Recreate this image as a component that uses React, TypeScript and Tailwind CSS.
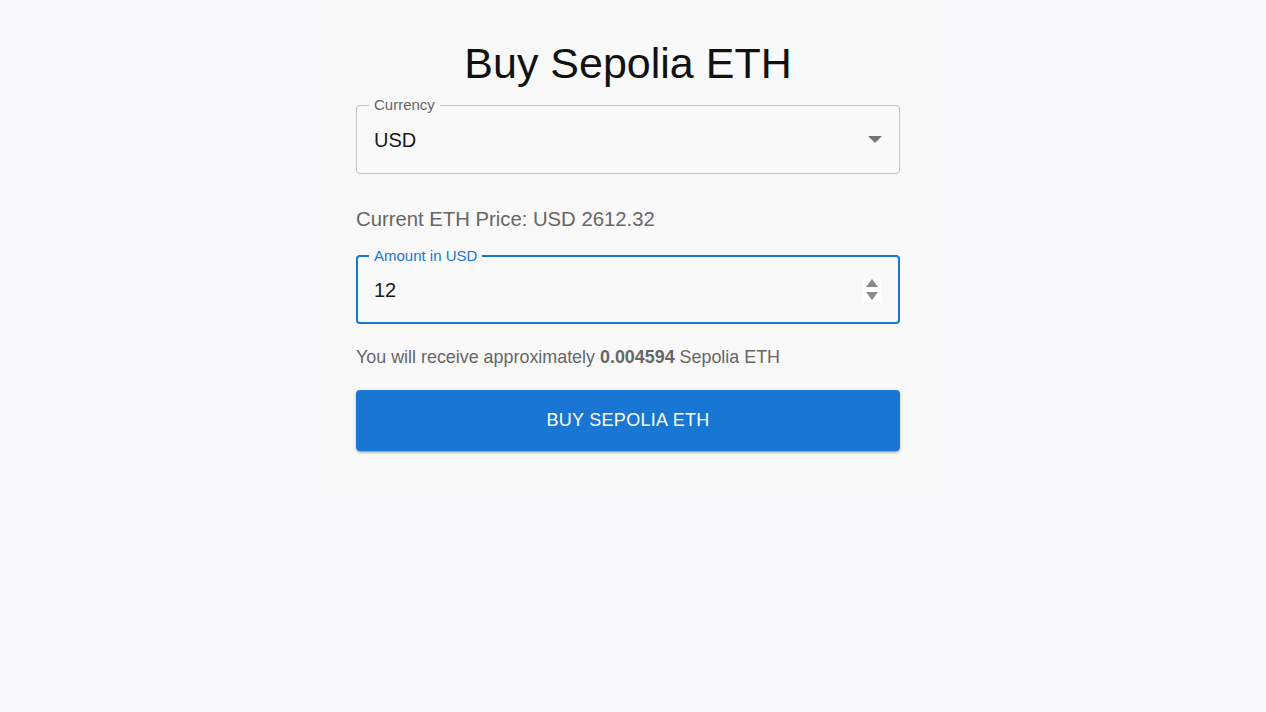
import { useState } from "react";

const font = { fontFamily: '"Liberation Sans", Arial, sans-serif' };

function Field({
    label,
    focused,
    children,
}: {
    label: string;
    focused?: boolean;
    children: React.ReactNode;
}) {
    return (
        <div
            className={`relative h-[69px] rounded-[4px] flex items-center pr-4 ${
                focused ? "border-2 border-[#1976d2] pl-[16px]" : "border border-[#c4c4c4] pl-[17px]"
            }`}
        >
            <span
                className={`absolute -top-[9px] px-[5px] bg-[#f9f9f9] text-[15px] leading-none ${
                    focused ? "left-[11px] text-[#1976d2]" : "left-[12px] text-[#666666]"
                }`}
            >
                {label}
            </span>
            {children}
        </div>
    );
}

export default function App() {
    const [amount] = useState("12");
    const price = 2612.32;
    const eth = (Number(amount) / price).toFixed(6);

    return (
        <div className="min-h-screen bg-[#f9fafb] text-[#111]" style={font}>
            <div className="w-[1256px]">
                <div className="w-[624px] mx-auto bg-[#f9f9f9] px-10 pt-[36px] pb-[40px]">
                    <h1 className="text-[43px] leading-[54px] text-center text-[#111] mb-[15px]">
                        Buy Sepolia ETH
                    </h1>

                    {/* Currency select */}
                    <Field label="Currency">
                        <span className="flex-1 text-[20px] text-[#1a1a1a]">USD</span>
                        <svg width="14" height="7" viewBox="0 0 14 7" className="mr-[1px]">
                            <path d="M0 0h14L7 7z" fill="#757575" />
                        </svg>
                    </Field>

                    <p className="mt-[30px] mb-[21px] text-[20.3px] leading-[30px] text-[#666666]">
                        Current ETH Price: USD {price}
                    </p>

                    {/* Amount input */}
                    <Field label="Amount in USD" focused>
                        <span className="flex-1 text-[20px] text-[#1a1a1a]">{amount}</span>
                        <div className="w-[18px] h-[23px] bg-white flex flex-col items-center justify-center gap-[5px] mr-[1px]">
                            <svg width="12" height="8" viewBox="0 0 12 8">
                                <path d="M6 0l6 8H0z" fill="#8a8a8a" />
                            </svg>
                            <svg width="12" height="8" viewBox="0 0 12 8">
                                <path d="M0 0h12L6 8z" fill="#8a8a8a" />
                            </svg>
                        </div>
                    </Field>

                    <p className="mt-[21px] mb-[21px] text-[17.9px] leading-[24px] text-[#666666]">
                        You will receive approximately <b className="font-bold">{eth}</b> Sepolia ETH
                    </p>

                    <button className="w-full h-[61px] rounded-[4px] bg-[#1976d2] text-white text-[18px] uppercase tracking-[0.3px] shadow-[0_3px_1px_-2px_rgba(0,0,0,0.2),0_2px_2px_0_rgba(0,0,0,0.14),0_1px_5px_0_rgba(0,0,0,0.12)]">
                        Buy Sepolia ETH
                    </button>
                </div>
            </div>
        </div>
    );
}
